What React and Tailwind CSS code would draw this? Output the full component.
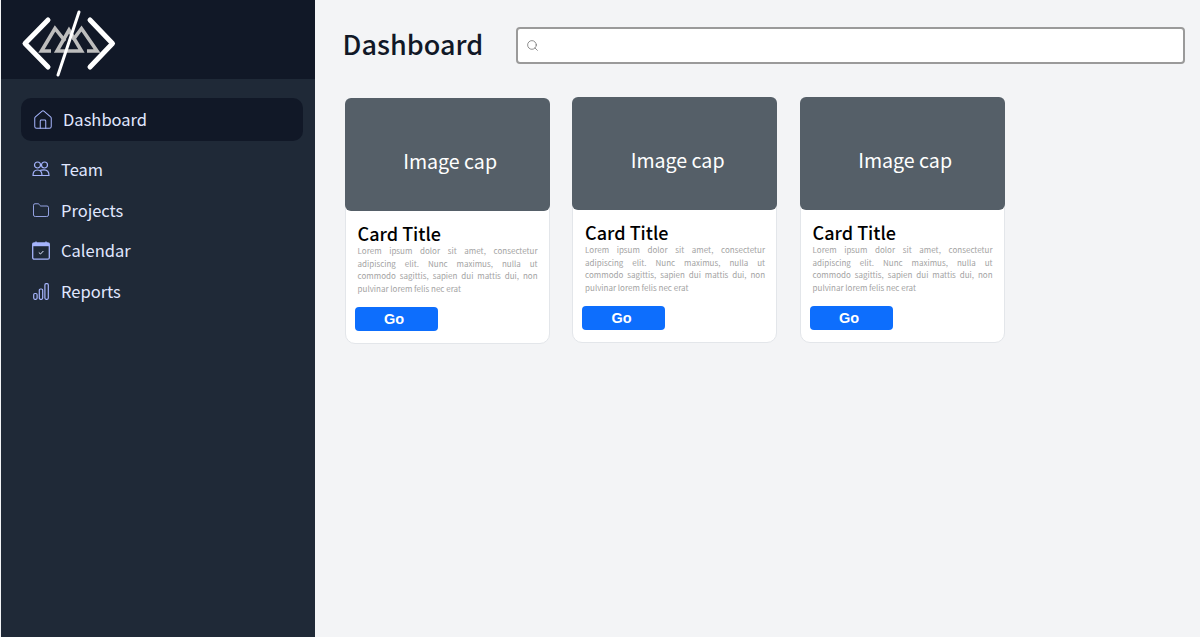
import React from 'react';
import { Home, Folder, Search } from 'lucide-react';

const font = { fontFamily: '"Noto Sans CJK SC", "Noto Sans", sans-serif' };

function Logo() {
  return (
    <svg width="100" height="79" viewBox="0 0 100 79" fill="none" className="ml-[19px]">
      <g stroke="#bdbdbd" strokeWidth="3.6" strokeLinejoin="miter">
        <path d="M45 41 L35 28.5 L21.5 51 H31" />
        <path d="M37 51 H61.5 L49 30 Z" />
        <path d="M53 40 L61.5 28.5 L77 51 H67" />
      </g>
      <g stroke="#ffffff" strokeWidth="5" strokeLinecap="round" strokeLinejoin="round">
        <path d="M28 20 L5 43.5 L28 67" />
        <path d="M70 20 L92.5 43.5 L70 67" />
      </g>
      <path d="M59 12 L38 75" stroke="#ffffff" strokeWidth="3" strokeLinecap="round" />
    </svg>
  );
}

function TeamIcon() {
  return (
    <svg width="18" height="16" viewBox="0 0 18 16" fill="none" stroke="#a5b4fc" strokeWidth="1.2">
      <circle cx="5.5" cy="4" r="3" />
      <circle cx="12.5" cy="4" r="3" />
      <path d="M1 14.5 C1 10.5 3 9 5.5 9 C8 9 10 11 10 14.5 Z" />
      <path d="M8 9.6 C9 9 10.5 8.8 12 8.8 C15 8.8 17 11 17 14.5 H7" />
    </svg>
  );
}

function CalendarIcon() {
  return (
    <svg width="18" height="19" viewBox="0 0 18 19" fill="none">
      <rect x="0.7" y="2" width="16.6" height="16.2" rx="1.5" stroke="#a5b4fc" strokeWidth="1.3" />
      <rect x="0.7" y="2" width="16.6" height="3.2" fill="#a5b4fc" />
      <path d="M4 0.5 V2 M14 0.5 V2" stroke="#a5b4fc" strokeWidth="1.3" />
      <path d="M6.8 11.5 L8.5 13 L11.4 10" stroke="#e0e7ff" strokeWidth="1" />
    </svg>
  );
}

function ReportsIcon() {
  return (
    <svg width="16" height="17" viewBox="0 0 16 17" fill="none" stroke="#a5b4fc" strokeWidth="1.2">
      <rect x="0.7" y="10.5" width="3.4" height="5.8" rx="1.2" />
      <rect x="6.3" y="6" width="3.4" height="10.3" rx="1.2" />
      <rect x="11.9" y="0.7" width="3.4" height="15.6" rx="1.2" />
    </svg>
  );
}

const navItems = [
  { label: 'Team', icon: <TeamIcon /> },
  { label: 'Projects', icon: <Folder size={21} strokeWidth={1.15} color="#a5b4fc" /> },
  { label: 'Calendar', icon: <CalendarIcon /> },
  { label: 'Reports', icon: <ReportsIcon /> },
];

const lines = [
  'Lorem ipsum dolor sit amet, consectetur',
  'adipiscing elit. Nunc maximus, nulla ut',
  'commodo sagittis, sapien dui mattis dui, non',
];

function Card({ className }) {
  return (
    <div className={`w-[205px] h-[246px] shrink-0 bg-white border border-[#e3e6ea] rounded-[10px] flex flex-col ${className || ''}`}>
      <div className="h-[113px] -mx-px -mt-px bg-[#555f68] rounded-[6px] flex items-center justify-center text-white text-[19.6px] pt-[13px] pl-[6px]">
        Image cap
      </div>
      <div className="pl-[12px] pr-[11px] pt-[11px]">
        <h5 className="text-[18px] leading-[23px] font-medium text-black">Card Title</h5>
        <p className="text-[8px] leading-[12.6px] text-[#a3a3a3]">
          {lines.map((line) => (
            <span key={line} className="block whitespace-nowrap text-justify [text-align-last:justify]">{line}</span>
          ))}
          <span className="block">pulvinar lorem felis nec erat</span>
        </p>
      </div>
      <button
        className="ml-[9px] mt-[12px] w-[83px] h-[24px] bg-[#0d6efd] rounded-[4px] text-white text-[14.5px] font-bold flex items-center justify-center pr-[4px]"
        style={{ fontFamily: '"Liberation Sans", sans-serif' }}
      >
        Go
      </button>
    </div>
  );
}

export default function App() {
  return (
    <div className="h-[637px] w-[1200px] flex bg-[#f3f4f6] overflow-hidden" style={font}>
      {/* Sidebar */}
      <aside className="w-[314px] ml-px bg-[#1f2937] flex flex-col shrink-0">
        <div className="h-[79px] bg-[#111827] flex items-center">
          <Logo />
        </div>
        <nav className="flex flex-col pt-[19px] pl-[20px] pr-[12px]">
          <div className="h-[43px] bg-[#111827] rounded-[10px] flex items-center pl-[11px] gap-[9px] text-[#e0e7ff] text-[16.5px]">
            <Home size={22} strokeWidth={1.1} color="#a5b4fc" />
            Dashboard
          </div>
          <div className="flex flex-col mt-[8px]">
            {navItems.map((item) => (
              <div key={item.label} className="h-[40.7px] flex items-center pl-[11px] gap-[11px] text-[#e0e7ff] text-[16.5px]">
                <span className="w-[18px] flex justify-center">{item.icon}</span>
                {item.label}
              </div>
            ))}
          </div>
        </nav>
      </aside>

      {/* Main */}
      <main className="flex-1 pl-[29.6px] pr-[15px]">
        <div className="flex items-center pt-[27px] h-[64px]">
          <h1 className="w-[172.4px] -ml-[2px] mr-px mb-[5px] text-[27px] font-medium text-[#111827] leading-[37px]">Dashboard</h1>
          <div className="flex-1 h-[37px] bg-white border-2 border-[#9a9a9a] rounded-[4px] flex items-center pl-[8px]">
            <Search size={13} strokeWidth={1.2} color="#555" />
          </div>
        </div>
        <div className="flex gap-[22.5px] mt-[33px]">
          <Card className="mt-px" />
          <Card />
          <Card />
        </div>
      </main>
    </div>
  );
}
